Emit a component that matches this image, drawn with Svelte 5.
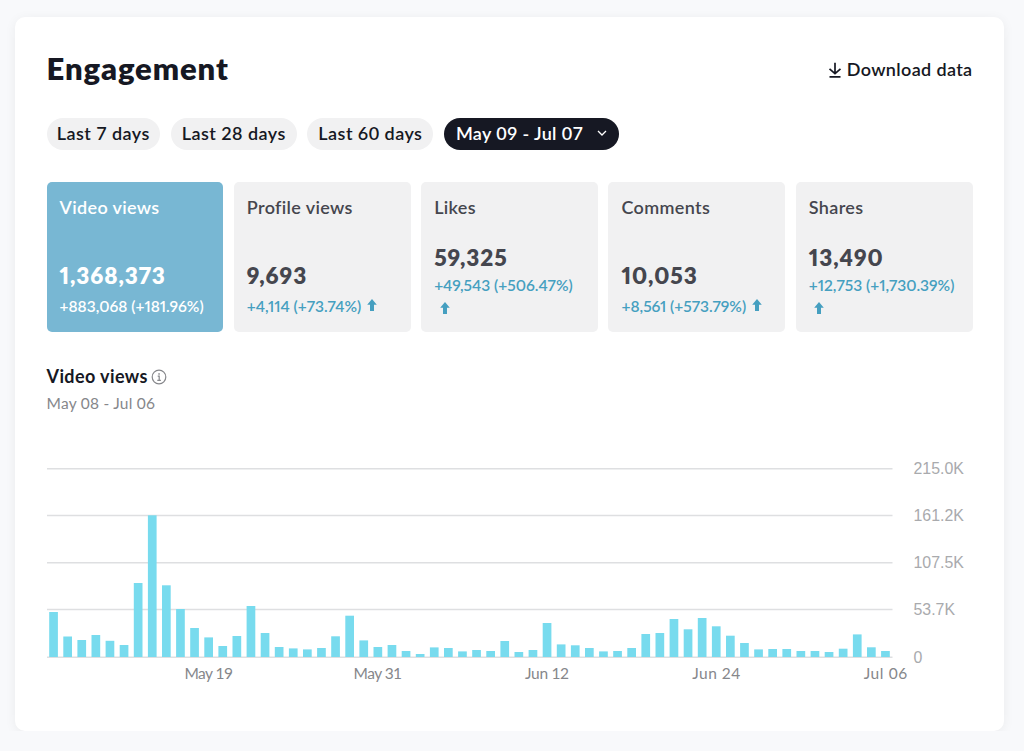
<script>

    const ranges = ['Last 7 days', 'Last 28 days', 'Last 60 days'];

    const stats = [
        { label: 'Video views', value: '1,368,373', delta: '+883,068 (+181.96%)', active: true },
        { label: 'Profile views', value: '9,693', delta: '+4,114 (+73.74%)', arrow: true },
        { label: 'Likes', value: '59,325', delta: '+49,543 (+506.47%)', arrow: true, wrap: true },
        { label: 'Comments', value: '10,053', delta: '+8,561 (+573.79%)', arrow: true },
        { label: 'Shares', value: '13,490', delta: '+12,753 (+1,730.39%)', arrow: true, wrap: true }
    ];

    // bar heights in chart pixels, one per day
    const bars = [
        45, 20.5, 17, 22, 16.2, 12, 74, 141.7, 71.7, 48, 29, 19.6,
        11, 21, 51, 24, 10, 8.6, 7.6, 9, 20.7, 41.3, 16.6, 10,
        12, 6, 3, 9.6, 9, 5.6, 7, 6, 16, 5, 7, 34,
        12.6, 11.7, 9, 5.6, 6, 9, 23, 24, 38, 27.7, 39, 30.7,
        21.3, 14, 7.6, 8, 8, 6, 6, 5, 8.3, 22.6, 9.7, 6
    ];

    const plotWidth = 846;
    const step = plotWidth / bars.length;
    const base = 207;

    const yTicks = [
        { y: 18.7, text: '215.0K' },
        { y: 65.5, text: '161.2K' },
        { y: 112.8, text: '107.5K' },
        { y: 159.5, text: '53.7K' },
        { y: 207.2, text: '0' }
    ];

    const xTicks = [
        { day: 12, text: 'May 19', width: 48.5 },
        { day: 24, text: 'May 31', width: 48.5 },
        { day: 36, text: 'Jun 12', width: 44 },
        { day: 48, text: 'Jun 24', width: 48 },
        { day: 60, text: 'Jul 06', width: 43.5 }
    ];

</script>

<section class="panel">
    <header>
        <h1>Engagement</h1>
        <button class="download">
            <svg width="14" height="16" viewBox="0 0 14 16">
                <path d="M7 .8v10.6M1.5 6.8l5.5 4.8 5.5-4.8M1.5 14.8h11" />
            </svg>
            <span>Download data</span>
        </button>
    </header>

    <div class="ranges">
        {#each ranges as range, i}
            <button class="pill" class:short={i === 0}>{range}</button>
        {/each}
        <button class="pill dark">
            <span>May 09 - Jul 07</span>
            <svg width="10" height="7" viewBox="0 0 10 7"><path d="M1 1l4 4 4-4" /></svg>
        </button>
    </div>

    <div class="stats">
        {#each stats as stat}
            <div class="stat" class:active={stat.active} class:wrap={stat.wrap}>
                <div class="label">{stat.label}</div>
                <div class="value">{stat.value}</div>
                <div class="delta">
                    <span>{stat.delta}</span>
                    {#if stat.arrow}
                        <svg width="10" height="12" viewBox="0 0 10 12"><path d="M5 0l4.8 5.8H7V12H3V5.8H.2z" /></svg>
                    {/if}
                </div>
            </div>
        {/each}
    </div>

    <div class="heading">
        <h2>Video views</h2>
        <svg width="16" height="16" viewBox="0 0 16 16">
            <circle cx="8" cy="8" r="6.8" />
            <path d="M6.7 7.2h1.5v4M6.3 11.3h3.6" />
            <rect x="7.3" y="4.2" width="1.5" height="1.5" />
        </svg>
    </div>
    <div class="period">May 08 - Jul 06</div>

    <svg class="chart" width="930" height="240" viewBox="0.5 0 930 240">
        {#each yTicks as tick}
            <line x1="0" x2={plotWidth} y1={tick.y} y2={tick.y} />
            <text class="y" x="867" y={tick.y + 5.3}>{tick.text}</text>
        {/each}
        {#each bars as h, i}
            <rect x={i * step + 2.7} y={base - h} width="8.7" height={h} />
        {/each}
        {#each xTicks as tick}
            <text class="x" x={(tick.day - 0.5) * step} y="229" textLength={tick.width}>{tick.text}</text>
        {/each}
    </svg>
</section>

<style>

    :global(body) {
        background: #f8f9fb;
        font-family: Lato, "Open Sans", sans-serif;
        color: #161823;
    }

    .panel {
        box-sizing: border-box;
        width: 989px;
        height: 714px;
        margin: 17px 0 0 15px;
        padding: 31px 31.5px 0;
        background: #fff;
        border-radius: 10px;
        box-shadow: 0 2px 12px rgba(0, 0, 0, 0.06);
    }

    button {
        border: 0;
        padding: 0;
        background: none;
        color: inherit;
        font-family: inherit;
        cursor: pointer;
    }

    header {
        display: flex;
        justify-content: space-between;
        align-items: center;
        height: 42px;
    }

    h1 {
        margin: 0;
        font-size: 31px;
        font-weight: 800;
        line-height: 40px;
        letter-spacing: 0.9px;
        padding-bottom: 2px;
    }

    .download {
        display: flex;
        align-items: center;
        gap: 5px;
        font-size: 18px;
        font-weight: 600;
        letter-spacing: 0.35px;
    }

    .download svg {
        fill: none;
        stroke: #161823;
        stroke-width: 1.7;
        margin-top: 1px;
    }

    .ranges {
        display: flex;
        gap: 10.7px;
        margin-top: 28px;
    }

    .pill {
        display: flex;
        align-items: center;
        justify-content: center;
        box-sizing: border-box;
        width: 126px;
        height: 32px;
        padding-bottom: 2px;
        border-radius: 16px;
        background: #f1f1f2;
        font-size: 18px;
        font-weight: 600;
        white-space: nowrap;
        letter-spacing: 0.45px;
    }

    .pill.short {
        width: 113.5px;
    }

    .pill.dark {
        width: 175px;
        gap: 14px;
        background: #161823;
        color: #fff;
        letter-spacing: 0.35px;
    }

    .dark svg {
        fill: none;
        stroke: #fff;
        stroke-width: 1.3;
    }

    .stats {
        display: grid;
        grid-template-columns: repeat(5, minmax(0, 1fr));
        gap: 10.6px;
        margin-top: 32px;
    }

    .stat {
        display: flex;
        flex-direction: column;
        box-sizing: border-box;
        height: 150px;
        padding: 13px 13px 14px;
        border-radius: 5px;
        background: #f1f1f2;
        color: #45464e;
        white-space: nowrap;
        font-variant-numeric: proportional-nums;
    }

    .label {
        margin-bottom: auto;
        font-size: 18px;
        font-weight: 600;
        line-height: 24px;
        letter-spacing: 0.35px;
    }

    .value {
        font-size: 22.5px;
        font-weight: 800;
        line-height: 36px;
        letter-spacing: 0.9px;
    }

    .delta {
        display: flex;
        align-items: center;
        gap: 6px;
        height: 24px;
        font-size: 15.5px;
        font-weight: 600;
        color: #459fc0;
    }

    .delta svg {
        fill: #459fc0;
        margin-bottom: 2px;
    }

    .wrap .value {
        line-height: 32px;
    }

    .wrap .delta {
        flex-direction: column;
        align-items: flex-start;
        gap: 0;
        height: 44px;
        line-height: 22px;
    }

    .wrap .delta svg {
        margin: 6px 0 0 5.5px;
    }

    .active {
        background: #78b7d3;
    }

    .active,
    .active .delta {
        color: #fff;
    }

    .heading {
        display: flex;
        align-items: center;
        gap: 3.5px;
        height: 24px;
        margin-top: 32px;
    }

    .heading svg {
        fill: #86878b;
        margin-top: 1px;
    }

    .heading circle,
    .heading path {
        fill: none;
        stroke: #86878b;
        stroke-width: 1.2;
    }

    h2 {
        margin: 0;
        font-size: 18px;
        font-weight: 700;
        line-height: 24px;
        letter-spacing: 0.4px;
    }

    .period {
        margin-top: 4px;
        font-size: 15.5px;
        line-height: 22px;
        letter-spacing: 0.25px;
        color: #86878b;
    }

    .chart {
        display: block;
        margin-top: 36px;
    }

    .chart line {
        stroke: #dedfe1;
        stroke-width: 1.4;
    }

    .chart rect {
        fill: #78dbee;
    }

    .y {
        font-family: "Liberation Sans", Arial, sans-serif;
        font-size: 15.9px;
        fill: #a9aaad;
    }

    .x {
        font-size: 15.5px;
        text-anchor: middle;
        fill: #86878b;
    }

</style>
